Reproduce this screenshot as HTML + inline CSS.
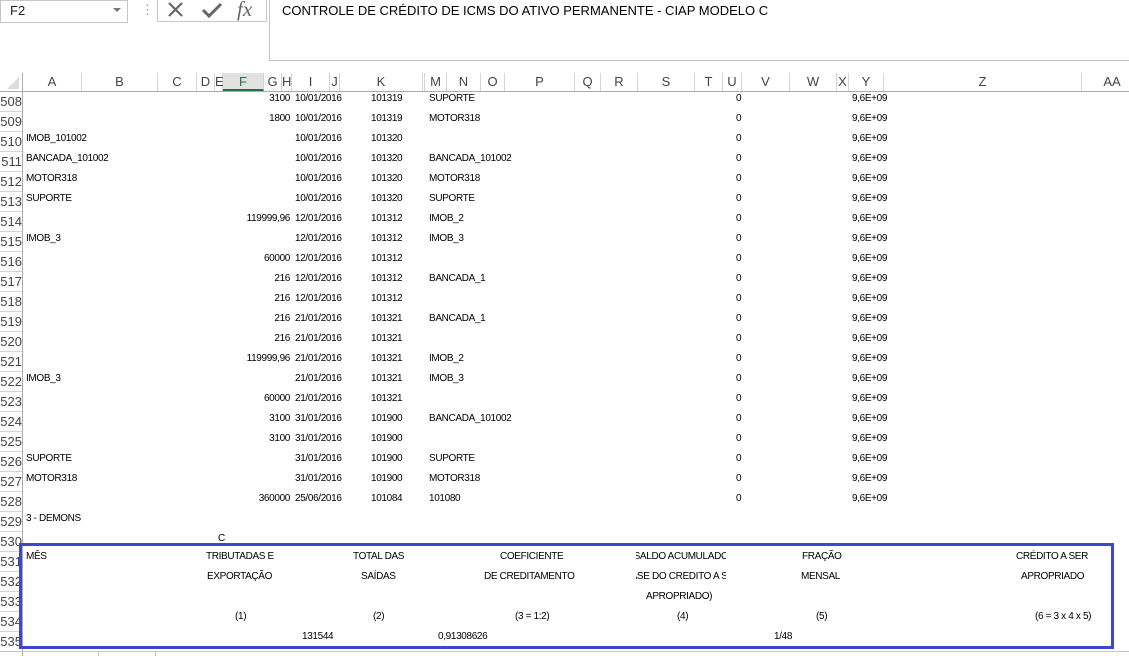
<!DOCTYPE html>
<html><head><meta charset="utf-8"><style>
body{margin:0;width:1129px;height:656px;background:#fff;position:relative;overflow:hidden;font-family:"Liberation Sans",Arial,sans-serif;}
.a{position:absolute;white-space:nowrap}
.c{font-size:10px;color:#000;line-height:12px;letter-spacing:-0.35px}
.r{text-align:right}
.ch{position:absolute;top:73px;height:18px;line-height:18px;font-size:13px;color:#444;text-align:center;border-right:1px solid #d4d4d4}
.rh{position:absolute;left:0;width:22px;font-size:13px;color:#444;text-align:right;border-bottom:1px solid #d4d4d4;height:19px;line-height:20px;overflow:hidden}
.clip{position:absolute;overflow:hidden;height:12px}
.clip div{position:absolute;left:-60px;width:210px;text-align:center;white-space:nowrap}
</style></head><body>
<div class="a" style="left:0;top:0;width:126px;height:21px;border:1px solid #c6c6c6;background:#fff"></div>
<div class="a" style="left:10px;top:3px;font-size:13px;color:#222">F2</div>
<div class="a" style="left:113px;top:8px;width:0;height:0;border-left:4px solid transparent;border-right:4px solid transparent;border-top:4px solid #777"></div>
<div class="a" style="left:141px;top:2px;font-size:13px;color:#999">⋮</div>
<div class="a" style="left:157px;top:0;width:108px;height:21px;border:1px solid #c6c6c6;border-top:none"></div>
<svg class="a" style="left:166px;top:1px" width="20" height="18"><path d="M3 2 L16 15 M16 2 L3 15" stroke="#666" stroke-width="2.2"/></svg>
<svg class="a" style="left:201px;top:1px" width="22" height="18"><path d="M2 9 L8 15 L20 3" stroke="#666" stroke-width="3" fill="none"/></svg>
<div class="a" style="left:237px;top:-3px;font-size:21px;font-style:italic;font-family:'Liberation Serif',serif;color:#666">fx</div>
<div class="a" style="left:269px;top:-1px;width:862px;height:61px;border:1px solid #c6c6c6;border-top:none"></div>
<div class="a" style="left:282px;top:3px;font-size:13px;color:#000">CONTROLE DE CRÉDITO DE ICMS DO ATIVO PERMANENTE - CIAP MODELO C</div>
<div class="a" style="left:0;top:91px;width:1129px;height:1px;background:#ababab"></div>
<div class="a" style="left:22px;top:73px;width:1px;height:583px;background:#ababab"></div>
<svg class="a" style="left:6px;top:77px" width="14" height="13"><path d="M13 0 L13 12 L1 12Z" fill="#dcdcdc"/></svg>
<div class="ch" style="left:23px;width:58px">A</div>
<div class="ch" style="left:82px;width:75px">B</div>
<div class="ch" style="left:158px;width:38px">C</div>
<div class="ch" style="left:197px;width:17px">D</div>
<div class="ch" style="left:215px;width:7px">E</div>
<div class="ch" style="left:223px;width:40px;background:#e1e1e1;color:#217346;border-bottom:2px solid #217346;height:16px">F</div>
<div class="ch" style="left:264px;width:17px">G</div>
<div class="ch" style="left:282px;width:9px">H</div>
<div class="ch" style="left:292px;width:37px">I</div>
<div class="ch" style="left:330px;width:9px">J</div>
<div class="ch" style="left:340px;width:82px">K</div>
<div class="ch" style="left:423px;width:1px"></div>
<div class="ch" style="left:425px;width:21px">M</div>
<div class="ch" style="left:447px;width:33px">N</div>
<div class="ch" style="left:481px;width:23px">O</div>
<div class="ch" style="left:505px;width:69px">P</div>
<div class="ch" style="left:575px;width:25px">Q</div>
<div class="ch" style="left:601px;width:36px">R</div>
<div class="ch" style="left:638px;width:56px">S</div>
<div class="ch" style="left:695px;width:27px">T</div>
<div class="ch" style="left:723px;width:18px">U</div>
<div class="ch" style="left:742px;width:47px">V</div>
<div class="ch" style="left:790px;width:46px">W</div>
<div class="ch" style="left:837px;width:11px">X</div>
<div class="ch" style="left:849px;width:34px">Y</div>
<div class="ch" style="left:884px;width:197px">Z</div>
<div class="ch" style="left:1082px;width:60px;border:none">AA</div>
<div class="rh" style="top:92px">508</div><div class="rh" style="top:112px">509</div><div class="rh" style="top:132px">510</div><div class="rh" style="top:152px">511</div><div class="rh" style="top:172px">512</div><div class="rh" style="top:192px">513</div><div class="rh" style="top:212px">514</div><div class="rh" style="top:232px">515</div><div class="rh" style="top:252px">516</div><div class="rh" style="top:272px">517</div><div class="rh" style="top:292px">518</div><div class="rh" style="top:312px">519</div><div class="rh" style="top:332px">520</div><div class="rh" style="top:352px">521</div><div class="rh" style="top:372px">522</div><div class="rh" style="top:392px">523</div><div class="rh" style="top:412px">524</div><div class="rh" style="top:432px">525</div><div class="rh" style="top:452px">526</div><div class="rh" style="top:472px">527</div><div class="rh" style="top:492px">528</div><div class="rh" style="top:512px">529</div><div class="rh" style="top:532px">530</div><div class="rh" style="top:552px">531</div><div class="rh" style="top:572px">532</div><div class="rh" style="top:592px">533</div><div class="rh" style="top:612px">534</div><div class="rh" style="top:632px">535</div>
<div id="d"></div>
<script>
var rows=[
["","3100","10/01/2016","101319","SUPORTE"],
["","1800","10/01/2016","101319","MOTOR318"],
["IMOB_101002","","10/01/2016","101320",""],
["BANCADA_101002","","10/01/2016","101320","BANCADA_101002"],
["MOTOR318","","10/01/2016","101320","MOTOR318"],
["SUPORTE","","10/01/2016","101320","SUPORTE"],
["","119999,96","12/01/2016","101312","IMOB_2"],
["IMOB_3","","12/01/2016","101312","IMOB_3"],
["","60000","12/01/2016","101312",""],
["","216","12/01/2016","101312","BANCADA_1"],
["","216","12/01/2016","101312",""],
["","216","21/01/2016","101321","BANCADA_1"],
["","216","21/01/2016","101321",""],
["","119999,96","21/01/2016","101321","IMOB_2"],
["IMOB_3","","21/01/2016","101321","IMOB_3"],
["","60000","21/01/2016","101321",""],
["","3100","31/01/2016","101900","BANCADA_101002"],
["","3100","31/01/2016","101900",""],
["SUPORTE","","31/01/2016","101900","SUPORTE"],
["MOTOR318","","31/01/2016","101900","MOTOR318"],
["","360000","25/06/2016","101084","101080"]];
var h="";
rows.forEach(function(r,i){var y=93+20*i;
if(r[0])h+='<div class="a c" style="left:26px;top:'+y+'px">'+r[0]+'</div>';
if(r[1])h+='<div class="a c r" style="right:839px;top:'+y+'px">'+r[1]+'</div>';
h+='<div class="a c" style="left:295px;top:'+y+'px">'+r[2]+'</div>';
h+='<div class="a c" style="left:371px;top:'+y+'px">'+r[3]+'</div>';
if(r[4])h+='<div class="a c" style="left:429px;top:'+y+'px">'+r[4]+'</div>';
h+='<div class="a c" style="left:736px;top:'+y+'px">0</div>';
h+='<div class="a c" style="left:852px;top:'+y+'px">9,6E+09</div>';
});
document.getElementById('d').innerHTML=h;
</script>
<div class="a c" style="left:26px;top:513px">3 - DEMONS</div>
<div class="a c" style="left:218px;top:533px">C</div>
<div class="a" style="left:19px;top:543px;width:1089px;height:100px;border:3px solid #3f48cc"></div>
<div class="a c" style="left:26px;top:551px">MÊS</div>
<div class="a c" style="left:206px;top:551px">TRIBUTADAS E</div>
<div class="a c" style="left:353px;top:551px">TOTAL DAS</div>
<div class="a c" style="left:500px;top:551px">COEFICIENTE</div>
<div class="clip c" style="left:636px;top:551px;width:90px"><div>SALDO ACUMULADO</div></div>
<div class="a c" style="left:802px;top:551px">FRAÇÃO</div>
<div class="a c" style="left:1016px;top:551px">CRÉDITO A SER</div>
<div class="a c" style="left:207px;top:571px">EXPORTAÇÃO</div>
<div class="a c" style="left:361px;top:571px">SAÍDAS</div>
<div class="clip c" style="left:484px;top:571px;width:92px"><div style="left:0;text-align:left">DE CREDITAMENTO</div></div>
<div class="clip c" style="left:636px;top:571px;width:90px"><div>(BASE DO CRÉDITO A SER</div></div>
<div class="a c" style="left:801px;top:571px">MENSAL</div>
<div class="a c" style="left:1021px;top:571px">APROPRIADO</div>
<div class="a c" style="left:646px;top:591px">APROPRIADO)</div>
<div class="a c" style="left:235px;top:611px">(1)</div>
<div class="a c" style="left:373px;top:611px">(2)</div>
<div class="a c" style="left:515px;top:611px">(3 = 1:2)</div>
<div class="a c" style="left:677px;top:611px">(4)</div>
<div class="a c" style="left:816px;top:611px">(5)</div>
<div class="a c" style="left:1035px;top:611px">(6 = 3 x 4 x 5)</div>
<div class="a c" style="left:302px;top:631px">131544</div>
<div class="a c" style="left:438px;top:631px">0,91308626</div>
<div class="a c" style="left:774px;top:631px">1/48</div>
<div class="a" style="left:0;top:651px;width:1129px;height:1px;background:#c6c6c6"></div>
<div class="a" style="left:98px;top:652px;width:1px;height:4px;background:#c6c6c6"></div>
<div class="a" style="left:155px;top:652px;width:1px;height:4px;background:#c6c6c6"></div>
</body></html>
